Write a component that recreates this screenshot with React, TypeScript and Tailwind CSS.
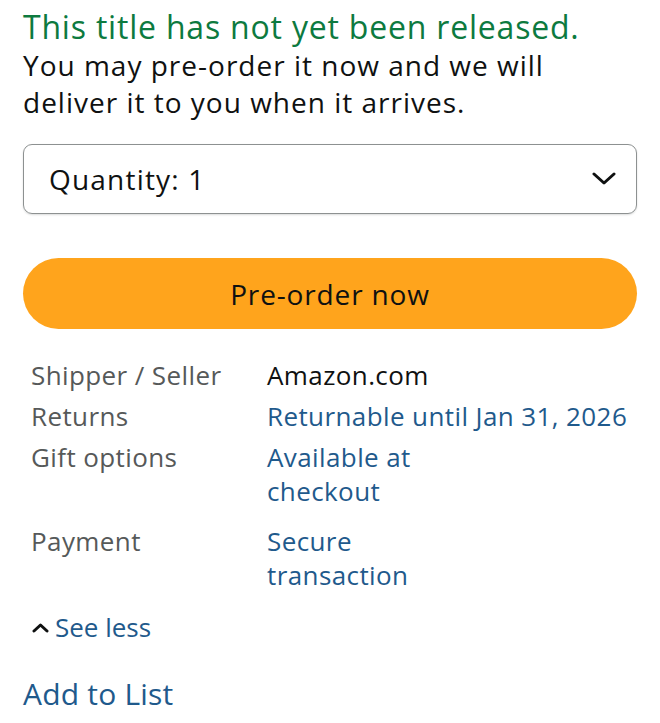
import React from "react";

export default function App() {
  const rows: { label: string; value: string[]; link: boolean }[] = [
    { label: "Shipper / Seller", value: ["Amazon.com"], link: false },
    { label: "Returns", value: ["Returnable until Jan 31, 2026"], link: true },
    { label: "Gift options", value: ["Available at", "checkout"], link: true },
    { label: "Payment", value: ["Secure", "transaction"], link: true },
  ];
  return (
    <div className="w-[660px] h-[723px] bg-white overflow-hidden px-[23px] pt-[7px]" style={{ fontFamily: "'Open Sans', 'Liberation Sans', sans-serif" }}>
      <div className="text-[32px] leading-[40px] tracking-[0.8px] text-[#0d7a3f]">This title has not yet been released.</div>
      <div className="text-[28px] leading-[37px] tracking-[1px] text-[#0f1111] w-[560px]">
        You may pre-order it now and we will deliver it to you when it arrives.
      </div>
      <div className="mt-[23px] h-[70px] rounded-[9px] border border-[#8d9191] flex items-center justify-between pl-[25px] pr-[20px] shadow-[0_1px_2px_rgba(15,17,17,0.15)]">
        <span className="text-[28px] tracking-[1.2px] text-[#0f1111]">Quantity: 1</span>
        <svg width="24" height="14" viewBox="0 0 24 14" fill="none">
          <path d="M2 2 L12 11 L22 2" stroke="#0f1111" strokeWidth="3" strokeLinecap="round" strokeLinejoin="round" />
        </svg>
      </div>
      <div className="mt-[44px] h-[71px] rounded-full bg-[#ffa41c] flex items-center justify-center text-[28px] tracking-[0.85px] text-[#0f1111]">
        Pre-order now
      </div>
      <div className="mt-[29px] pl-[8px] text-[26px] leading-[34px] tracking-[0.4px]">
        {rows.map((r, i) => (
          <div key={i} className={`flex ${i === 3 ? "mt-[16px]" : i > 0 ? "mt-[7px]" : ""}`}>
            <div className="w-[236px] text-[#565959]">{r.label}</div>
            <div className={r.link ? "text-[#1f5a8c]" : "text-[#0f1111]"}>
              {r.value.map((v, j) => (
                <div key={j}>{v}</div>
              ))}
            </div>
          </div>
        ))}
      </div>
      <div className="mt-[16px] pl-[9px] flex items-center gap-[6px] text-[26px] text-[#1f5a8c]">
        <svg width="17" height="11" viewBox="0 0 17 11" fill="none">
          <path d="M2 9 L8.5 3 L15 9" stroke="#0f1111" strokeWidth="3" strokeLinecap="round" strokeLinejoin="round" />
        </svg>
        <span>See less</span>
      </div>
      <div className="mt-[24px] text-[30px] tracking-[0.2px] text-[#1f5a8c]">Add to List</div>
    </div>
  );
}
